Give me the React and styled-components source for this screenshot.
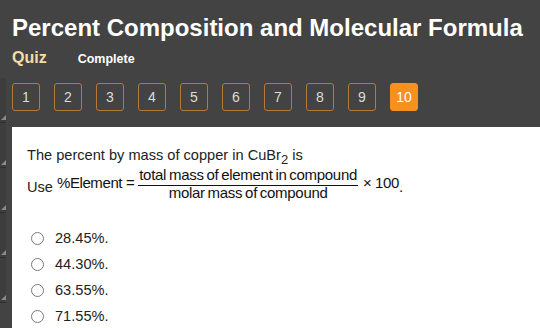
import styled, { createGlobalStyle } from 'styled-components'

const Global = createGlobalStyle`
  html, body {
    margin: 0;
    padding: 0;
    background: #434343;
    font-family: "Liberation Sans", Arial, sans-serif;
    overflow: hidden;
  }
`

const Page = styled.div`
  width: 540px;
  height: 328px;
  display: flex;
  flex-direction: column;
  background: #434343;
`
const Header = styled.header`
  padding: 14px 0 0 12px;
  height: 64px;
  box-sizing: border-box;
`
const Title = styled.h1`
  margin: 0;
  font-size: 24px;
  line-height: 28px;
  font-weight: 700;
  color: #fff;
  white-space: nowrap;
`
const Meta = styled.div`
  display: flex;
  align-items: baseline;
  gap: 31px;
  margin-top: 7px;
`
const Quiz = styled.span`
  font-size: 16px;
  font-weight: 700;
  color: #f2dca8;
`
const Status = styled.span`
  font-size: 12.5px;
  font-weight: 700;
  color: #fff;
`
const Body = styled.div`
  flex: 1;
  display: flex;
  min-height: 0;
`
const Strip = styled.div`
  width: 6px;
  padding-top: 14px;
  display: flex;
  flex-direction: column;
`
const StripItem = styled.div`
  position: relative;
  height: 44px;
  border-bottom: 1px solid #2e2e2e;
  background: #3d3d3d;

  &::after {
    content: '';
    position: absolute;
    right: 0;
    bottom: 2px;
    border-left: 5px solid transparent;
    border-bottom: 5px solid #8a8a8a;
  }
`
const Main = styled.div`
  flex: 1;
  display: flex;
  flex-direction: column;
  padding-left: 6px;
  min-width: 0;
`
const Steps = styled.nav`
  display: flex;
  gap: 14px;
  padding: 19px 0 16px;
`
const Step = styled.button`
  width: 28px;
  height: 28px;
  box-sizing: border-box;
  padding: 0;
  border-radius: 3px;
  border: 1px solid ${({ $active }) => ($active ? '#f7901e' : '#b57a37')};
  background: ${({ $active }) => ($active ? '#f7901e' : 'transparent')};
  color: ${({ $active }) => ($active ? '#fff' : '#dcdcdc')};
  font-family: "Liberation Sans", Arial, sans-serif;
  font-size: 14px;
`
const Panel = styled.section`
  flex: 1;
  background: #fff;
  padding: 19px 15px 0;
  color: #222;
  font-size: 14.6px;
`
const Question = styled.p`
  margin: 0;
  line-height: 18px;

  sub {
    font-size: 13px;
    line-height: 0;
  }
`
const UseLine = styled.div`
  display: flex;
  align-items: flex-start;
  height: 40px;
  white-space: nowrap;
`
const UseWord = styled.span`
  margin-top: 14px;
  margin-right: 4px;
  line-height: 18px;
`
const MathText = styled.span`
  margin-top: ${({ $top }) => $top}px;
  font-size: 15px;
  line-height: 16px;
  letter-spacing: -0.4px;
  color: #111;
`
const Fraction = styled.span`
  display: inline-flex;
  flex-direction: column;
  align-items: center;
  margin: 3px 5px 0 4px;
  font-size: 15px;
  letter-spacing: -0.3px;
  word-spacing: -1px;
  color: #111;
`
const Num = styled.span`
  padding: 0 1px 2px;
  border-bottom: 1px solid #111;
  line-height: 16px;
`
const Den = styled.span`
  line-height: 13px;
`
const Options = styled.ul`
  list-style: none;
  margin: 25px 0 0;
  padding: 0 0 0 4px;
  display: flex;
  flex-direction: column;
  gap: 8px;
`
const Option = styled.li`
  display: flex;
  align-items: center;
  gap: 11px;
  height: 18px;
`
const Radio = styled.span`
  width: 11px;
  height: 11px;
  border: 1px solid #7a7a7a;
  border-radius: 50%;
  background: #fff;
`

const steps = [1, 2, 3, 4, 5, 6, 7, 8, 9, 10]
const answers = ['28.45%.', '44.30%.', '63.55%.', '71.55%.']

export default function App() {
  return (
    <Page>
      <Global />
      <Header>
        <Title>Percent Composition and Molecular Formula</Title>
        <Meta>
          <Quiz>Quiz</Quiz>
          <Status>Complete</Status>
        </Meta>
      </Header>
      <Body>
        <Strip>
          <StripItem />
          <StripItem />
          <StripItem />
          <StripItem />
          <StripItem />
        </Strip>
        <Main>
          <Steps>
            {steps.map((n) => (
              <Step key={n} $active={n === 10}>{n}</Step>
            ))}
          </Steps>
          <Panel>
            <Question>
              The percent by mass of copper in CuBr<sub>2</sub> is
            </Question>
            <UseLine>
              <UseWord>Use</UseWord>
              <MathText $top={11}>%Element =</MathText>
              <Fraction>
                <Num>total mass of element in compound</Num>
                <Den>molar mass of compound</Den>
              </Fraction>
              <MathText $top={11}>× 100</MathText>
              <MathText $top={15}>.</MathText>
            </UseLine>
            <Options>
              {answers.map((a) => (
                <Option key={a}>
                  <Radio />
                  {a}
                </Option>
              ))}
            </Options>
          </Panel>
        </Main>
      </Body>
    </Page>
  )
}
